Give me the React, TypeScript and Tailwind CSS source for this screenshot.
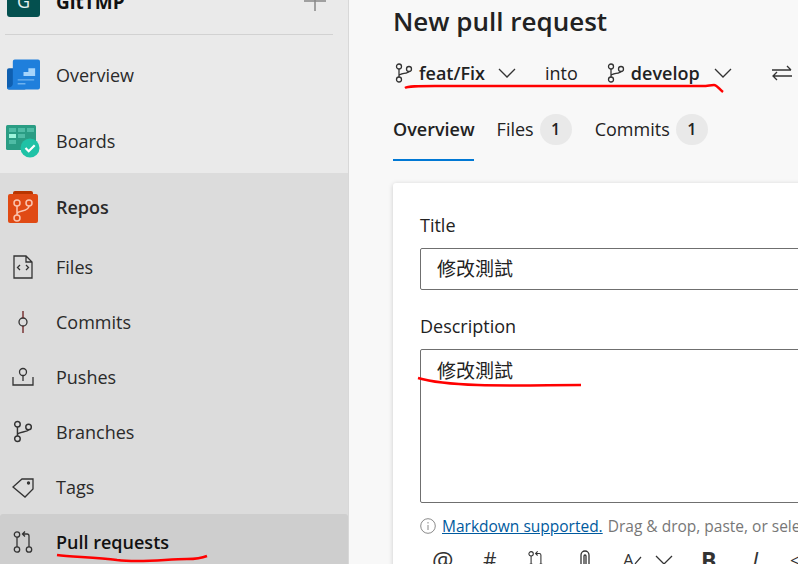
import type { ReactNode } from 'react';

const Branch = ({ width = 18, height = 20 }: { width?: number; height?: number }) => (
  <svg width={width} height={height} viewBox="0 0 18 20" fill="none" stroke="#333" strokeWidth="1.3">
    <circle cx="4" cy="3.5" r="2.5" />
    <circle cx="4" cy="16.5" r="2.5" />
    <circle cx="14" cy="6" r="2.5" />
    <path d="M4 6v8M4 13c0-3 9-2 10-4.500" />
  </svg>
);

const Chevron = () => (
  <svg width="18" height="10" viewBox="0 0 18 10" fill="none" stroke="#333" strokeWidth="1.3">
    <path d="M1 1l8 8 8-8" />
  </svg>
);

const OverviewIcon = () => (
  <svg className="ml-[1px]" width="33" height="32" viewBox="0 0 34 32">
    <rect x="0" y="9" width="20" height="22" rx="2" fill="#0f5fb0" />
    <path d="M6 2a2 2 0 0 1 2-2h24a2 2 0 0 1 2 2v27a2 2 0 0 1-2 2H2a2 2 0 0 1-2-2c3 0 6-1 6-4z" fill="#1f7fdc" />
    <path d="M11 17h6v-4h5v-4h7v8H11z" fill="#a5d4fb" />
    <path d="M11 21h17M11 25h8" stroke="#6fb2ee" strokeWidth="1.5" />
  </svg>
);

const BoardsIcon = () => (
  <svg width="34" height="34" viewBox="0 0 34 34">
    <rect x="0" y="1" width="30" height="25" rx="1.500" fill="#2a9d84" />
    <path d="M3 4h7v4H3zM12 4h7v4h-7zM21 4h7v4h-7zM12 10h7v4h-7zM3 16h7v4H3z" fill="#4fbca5" />
    <path d="M3 10h7v4H3z" fill="#9df5dc" />
    <circle cx="24" cy="24" r="9.500" fill="#1fc2a6" />
    <path d="M19.500 24l3.200 3.200 6-6" fill="none" stroke="#fff" strokeWidth="2.200" />
  </svg>
);

const ReposIcon = () => (
  <svg width="32" height="34" viewBox="0 0 32 34">
    <path d="M6 3a2 2 0 0 1 2-2h16a2 2 0 0 1 2 2v3H6z" fill="#b93500" />
    <rect x="1" y="4" width="30" height="29" rx="2" fill="#e04a14" />
    <g fill="none" stroke="#fbc4ae" strokeWidth="1.500">
      <circle cx="10" cy="13" r="3" />
      <circle cx="22" cy="13" r="3" />
      <circle cx="10" cy="28" r="3" />
      <path d="M10 16v9M10 24c0-4 12-2 12-8" />
    </g>
  </svg>
);

const FilesIcon = () => (
  <svg width="20" height="24" viewBox="0 0 20 24" fill="none" stroke="#333" strokeWidth="1.300">
    <path d="M1 1h12l6 6v16H1zM13 1v6h6" />
    <path d="M7 10l-2.500 2.500L7 15M13 10l2.500 2.500L13 15" />
  </svg>
);

const CommitsIcon = () => (
  <svg width="12" height="22" viewBox="0 0 12 22" fill="none" stroke="#333" strokeWidth="1.300">
    <circle cx="6" cy="11" r="4" />
    <path d="M6 0v7M6 15v7" stroke="#6b1d1d" />
  </svg>
);

const PushesIcon = () => (
  <svg width="22" height="20" viewBox="0 0 22 20" fill="none" stroke="#333" strokeWidth="1.300">
    <circle cx="11" cy="5" r="3.500" />
    <path d="M11 8.500V14M1 10v8h20v-8" />
  </svg>
);

const TagsIcon = () => (
  <svg width="22" height="22" viewBox="0 0 22 22" fill="none" stroke="#333" strokeWidth="1.300">
    <path d="M1 11l9-8h11v10l-8 8z" />
    <circle cx="16.500" cy="7" r="1" fill="#333" />
  </svg>
);

const PullIcon = ({ size = 22 }: { size?: number }) => (
  <svg width={size} height={size} viewBox="0 0 22 22" fill="none" stroke="#333" strokeWidth="1.300">
    <circle cx="5" cy="3.500" r="2.700" />
    <circle cx="5" cy="18.500" r="2.700" />
    <circle cx="17" cy="18.500" r="2.700" />
    <path d="M5 6v10M17 16V5a2 2 0 0 0-2-2h-4M13 0.500L10.500 3l2.500 2.500" />
  </svg>
);

const NavRow = ({ icon, label, className }: { icon: ReactNode; label: string; className: string }) => (
  <div className={`flex items-center ${className}`}>
    <div className="flex w-[56px] shrink-0 items-center justify-center pl-[6px] pr-[16px]">{icon}</div>
    <span>{label}</span>
  </div>
);

const Badge = () => (
  <span className="ml-[6px] flex h-[31px] w-[32px] items-center justify-center rounded-full bg-[#e9e9e9] text-[16px] font-semibold">
    1
  </span>
);

export default function App() {
  return (
    <div className="flex h-[564px] w-[798px] overflow-hidden bg-[#f8f8f8] text-[18px] leading-6 text-[#222] font-['Open_Sans','Noto_Sans_CJK_TC',sans-serif]">
      <aside className="relative h-full w-[349px] shrink-0 border-r border-[#d8d8d8] bg-[#eaeaea] text-[#2a2a2a]">
        <div className="mx-[5px] -mt-[16px] flex h-[51px] w-[328px] items-start border-b border-[#d2d2d2] pl-[2px]">
          <div className="flex h-[33px] w-[33px] items-center justify-center rounded-[3px] bg-[#04504f] text-[18px] text-[#e5f0ef]">
            G
          </div>
          <span className="ml-[16px] mt-[6px] text-[19px] font-bold text-[#111]">GitTMP</span>
          <span className="ml-auto mr-[7px] mt-[3px]">
            <svg className="block" width="22" height="24" viewBox="0 0 22 24" stroke="#888" strokeWidth="1.500">
              <path d="M11 0v24M0 14h22" />
            </svg>
          </span>
        </div>
        <NavRow className="h-[66px] mt-[7px]" icon={<OverviewIcon />} label="Overview" />
        <NavRow className="h-[65px]" icon={<BoardsIcon />} label="Boards" />
        <div className="bg-[#dcdcdc]">
          <NavRow className="h-[67px] font-semibold" icon={<ReposIcon />} label="Repos" />
          <NavRow className="h-[55px] -mt-[1px]" icon={<FilesIcon />} label="Files" />
          <NavRow className="h-[55px]" icon={<CommitsIcon />} label="Commits" />
          <NavRow className="h-[55px]" icon={<PushesIcon />} label="Pushes" />
          <NavRow className="h-[55px]" icon={<Branch width={20} height={23} />} label="Branches" />
          <NavRow className="h-[55px]" icon={<TagsIcon />} label="Tags" />
          <NavRow className="h-[55px] rounded-[3px] bg-[#cecece] font-semibold text-[#111]" icon={<PullIcon />} label="Pull requests" />
        </div>
        <svg className="absolute left-[56px] top-[550px]" width="152" height="14" viewBox="0 0 152 14" fill="none" stroke="#f00" strokeWidth="2.500">
          <path d="M1 5c15 2 40 2 60 5 25 3 50-1 70-1 8 0 15-1 20-3" />
        </svg>
      </aside>

      <main className="relative min-w-0 flex-1 pl-[44px]">
        <h1 className="mt-[1px] h-[40px] text-[26px] leading-[40px] font-semibold text-[#222]">New pull request</h1>

        <div className="mt-[20px] flex h-[24px] items-center font-semibold whitespace-nowrap">
          <span className="ml-[2px] mr-[6px]"><Branch /></span>
          <span>feat/Fix</span>
          <span className="ml-[13px]"><Chevron /></span>
          <span className="ml-[29px] font-normal">into</span>
          <span className="ml-[29px] mr-[6px]"><Branch /></span>
          <span>develop</span>
          <span className="ml-[14px]"><Chevron /></span>
          <span className="ml-[40px]">
            <svg width="20" height="16" viewBox="0 0 20 16" fill="none" stroke="#333" strokeWidth="1.300">
              <path d="M0 5h19M15 1l4 4M20 11H1M5 7l-4 4 4 4" />
            </svg>
          </span>
        </div>

        <div className="mt-[28px] flex h-[32px] items-center whitespace-nowrap">
          <span className="font-semibold">Overview</span>
          <span className="ml-[22px]">Files</span>
          <Badge />
          <span className="ml-[23px]">Commits</span>
          <Badge />
        </div>
        <div className="mt-[14px] h-[2px] w-[81px] bg-[#0078d4]" />

        <section className="mt-[22px] h-[420px] w-[500px] rounded-[3px] bg-white pl-[27px] pt-[30px] shadow-[0_1px_5px_rgba(0,0,0,0.18)]">
          <label className="block h-[24px]">Title</label>
          <div className="mt-[11px] flex h-[42px] items-center rounded-[2px] border border-[#6f6f6f] pl-[16px] text-[19px]">
            修改測試
          </div>
          <label className="mt-[24px] block h-[24px]">Description</label>
          <div className="mt-[11px] h-[154px] rounded-[2px] border border-[#6f6f6f] pl-[16px] pt-[9px] text-[19px]">
            修改測試
          </div>
          <div className="mt-[12px] flex h-[22px] items-center whitespace-nowrap text-[15.500px] text-[#777]">
            <svg className="mr-[6px] shrink-0" width="16" height="16" viewBox="0 0 16 16" fill="none" stroke="#8a8a8a">
              <circle cx="8" cy="8" r="7.300" />
              <path d="M8 7v5M8 4v1.500" />
            </svg>
            <span className="text-[#005a9e] underline">Markdown supported.</span>
            <span className="ml-[5px]">Drag &amp; drop, paste, or select files to insert.</span>
          </div>
          <div className="mt-[7px] flex h-[32px] items-center text-[#333] whitespace-nowrap">
            <span className="ml-[12px] w-[51px] text-[24px]">@</span>
            <span className="w-[44px] text-[21px]">#</span>
            <span className="w-[51px]"><PullIcon size={18} /></span>
            <span className="w-[45px]">
              <svg width="14" height="22" viewBox="0 0 14 22" fill="none" stroke="#333" strokeWidth="1.300">
                <path d="M3 22V6a4 4 0 0 1 8 0v16M6 22V7a1 1 0 0 1 2 0v15" />
              </svg>
            </span>
            <span className="flex w-[32px] items-center text-[17px]">
              A
              <svg width="8" height="10" viewBox="0 0 8 10" fill="none" stroke="#333" strokeWidth="1.200">
                <path d="M1 9l6-7" />
              </svg>
            </span>
            <span className="w-[46px]"><Chevron /></span>
            <span className="w-[51px] text-[23px] font-bold">B</span>
            <span className="w-[38px] text-[23px] italic">I</span>
            <span className="text-[18px]">&lt;</span>
          </div>
        </section>

        <svg className="absolute left-[54px] top-[80px]" width="330" height="16" viewBox="0 0 330 16" fill="none" stroke="#f00" strokeWidth="2.500">
          <path d="M2 8c3-2 12-2 30-2h268c4 0 8-1 11-1 3 0 5 4 9 7" />
        </svg>
        <svg className="absolute left-[68px] top-[376px]" width="166" height="14" viewBox="0 0 166 14" fill="none" stroke="#f00" strokeWidth="2.500">
          <path d="M1 2c10 3 30 6 60 7 35 1 70 0 103 0" />
        </svg>
      </main>
    </div>
  );
}
